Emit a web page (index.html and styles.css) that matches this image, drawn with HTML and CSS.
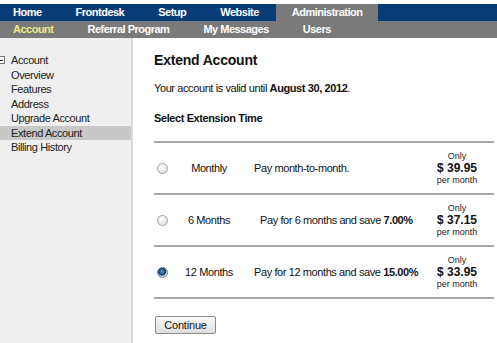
FILE: index.html
```html
<!DOCTYPE html>
<html lang="en">
<head>
    <meta charset="UTF-8">
    <meta name="viewport" content="width=device-width, initial-scale=1.0">
    <title>Extend Account</title>
    <link rel="stylesheet" href="styles.css">
</head>
<body>
    <div class="header">
        <nav class="topnav">
            <a href="#">Home</a>
            <a href="#">Frontdesk</a>
            <a href="#">Setup</a>
            <a href="#">Website</a>
            <a href="#" class="active">Administration</a>
        </nav>
        <nav class="subnav">
            <a href="#" class="active">Account</a>
            <a href="#">Referral Program</a>
            <a href="#">My Messages</a>
            <a href="#">Users</a>
        </nav>
    </div>

    <div class="wrap">
        <ul class="sidebar">
            <li class="tree-root"><span class="tree-toggle"></span>Account</li>
            <li>Overview</li>
            <li>Features</li>
            <li>Address</li>
            <li>Upgrade Account</li>
            <li class="selected">Extend Account</li>
            <li>Billing History</li>
        </ul>

        <div class="main">
            <h1>Extend Account</h1>
            <p class="valid">Your account is valid until <b>August 30, 2012</b>.</p>
            <p class="select-title">Select Extension Time</p>

            <div class="plans">
                <label class="plan">
                    <span class="radio-cell"><input type="radio" name="plan"></span>
                    <span class="plan-name">Monthly</span>
                    <span class="plan-desc">Pay month-to-month.</span>
                    <span class="plan-price">
                        <small>Only</small>
                        <b>$ 39.95</b>
                        <small>per month</small>
                    </span>
                </label>
                <label class="plan">
                    <span class="radio-cell"><input type="radio" name="plan"></span>
                    <span class="plan-name">6 Months</span>
                    <span class="plan-desc shifted">Pay for 6 months and save <b>7.00%</b></span>
                    <span class="plan-price">
                        <small>Only</small>
                        <b>$ 37.15</b>
                        <small>per month</small>
                    </span>
                </label>
                <label class="plan">
                    <span class="radio-cell"><input type="radio" name="plan" checked></span>
                    <span class="plan-name">12 Months</span>
                    <span class="plan-desc">Pay for 12 months and save <b>15.00%</b></span>
                    <span class="plan-price">
                        <small>Only</small>
                        <b>$ 33.95</b>
                        <small>per month</small>
                    </span>
                </label>
            </div>

            <button class="continue-btn">Continue</button>
        </div>
    </div>
</body>
</html>
```

FILE: styles.css
```css
body {
    margin: 0;
    font-family: "Liberation Sans", Arial, sans-serif;
    font-size: 11px;
    letter-spacing: -0.4px;
    color: #111;
    background-color: #fff;
}

.header {
    padding-top: 4px;
}

.topnav,
.subnav {
    display: flex;
    height: 17px;
}

.topnav {
    background-color: #083c77;
}

.subnav {
    background-color: #7a7a7a;
}

.topnav a,
.subnav a {
    display: block;
    padding: 0 17px;
    line-height: 17px;
    color: #fff;
    font-weight: bold;
    letter-spacing: -0.5px;
    text-decoration: none;
}

.topnav a:first-child,
.subnav a:first-child {
    padding-left: 13px;
}

.topnav a.active {
    background-color: #7a7a7a;
    padding: 0 16px;
}

.subnav a.active {
    color: #eaea86;
}

.wrap {
    display: flex;
    min-height: calc(100vh - 38px);
}

.sidebar {
    list-style: none;
    margin: 0;
    padding: 15px 0 0;
    width: 131px;
    flex-shrink: 0;
    background-color: #efefef;
    border-right: 2px solid #dadada;
    color: #222;
}

.sidebar li {
    padding-left: 11px;
    line-height: 14.5px;
}

.sidebar li.selected {
    background-color: #c8c8c8;
}

.tree-toggle {
    display: inline-block;
    position: relative;
    width: 6px;
    height: 6px;
    border: 1px solid #777;
    background-color: #fff;
    margin-left: -14px;
    margin-right: 6px;
    vertical-align: 0;
}

.tree-toggle::after {
    content: "";
    position: absolute;
    left: 1px;
    right: 1px;
    top: 2.5px;
    height: 1px;
    background-color: #333;
}

.main {
    flex: 1;
    padding: 14px 3px 0 21px;
}

.main h1 {
    margin: 0;
    font-size: 14px;
    line-height: 17px;
    letter-spacing: -0.2px;
}

.valid {
    margin: 12px 0 0;
    line-height: 14px;
}

.select-title {
    margin: 16px 0 0;
    line-height: 14px;
    font-weight: bold;
}

.plans {
    margin-top: 16px;
    border-bottom: 2px solid #a9a9a9;
}

.plan {
    display: grid;
    grid-template-columns: 24px 62px 1fr 74px;
    align-items: center;
    height: 50px;
    border-top: 2px solid #a9a9a9;
}

.radio-cell {
    padding-left: 3px;
    display: flex;
}

.radio-cell input {
    appearance: none;
    -webkit-appearance: none;
    margin: 0;
    width: 11px;
    height: 11px;
    border-radius: 50%;
    border: 1px solid #a4a4a4;
    background: radial-gradient(circle at 40% 35%, #ffffff 0%, #e6e6e6 60%, #cfcfcf 100%);
    box-sizing: border-box;
}

.radio-cell input:checked {
    border-color: #5a7a98;
    background: radial-gradient(circle at 45% 40%, #6fa4cf 0%, #1e5686 35%, #123a5e 50%, #c9d6e2 60%, #e8eef4 100%);
}

.plan-name {
    text-align: center;
}

.plan-desc {
    padding-left: 14px;
}

.plan-desc.shifted {
    padding-left: 20px;
}

.plan-price {
    display: flex;
    flex-direction: column;
    align-items: center;
}

.plan-price small {
    font-size: 9px;
    line-height: 11px;
    letter-spacing: 0;
    color: #222;
}

.plan-price b {
    font-size: 12px;
    line-height: 13px;
    letter-spacing: 0;
}

.continue-btn {
    margin-top: 17px;
    margin-left: 1px;
    width: 61px;
    height: 18px;
    padding: 0;
    font-family: "Liberation Sans", Arial, sans-serif;
    font-size: 11px;
    letter-spacing: -0.2px;
    color: #111;
    background: linear-gradient(#fbfbfb, #dedede);
    border: 1px solid #8a8a8a;
    border-radius: 2px;
}
```
